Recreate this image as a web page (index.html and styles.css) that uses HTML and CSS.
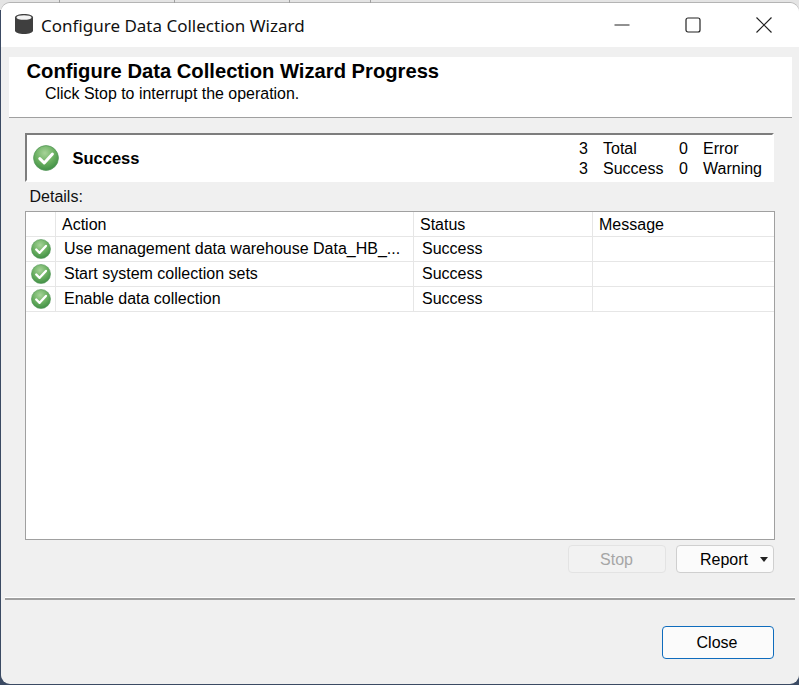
FILE: index.html
```html
<!DOCTYPE html>
<html>
<head>
<meta name="viewport" content="width=device-width, initial-scale=1">
<title>Configure Data Collection Wizard</title>
<link rel="stylesheet" href="styles.css">
</head>
<body>

<svg class="defs" width="0" height="0">
  <defs>
    <radialGradient id="ball" cx="45%" cy="30%" r="75%">
      <stop offset="0" stop-color="#a6d398"/>
      <stop offset="0.55" stop-color="#68ae5f"/>
      <stop offset="1" stop-color="#3a8a42"/>
    </radialGradient>
    <symbol id="ok" viewBox="0 0 26 26">
      <circle cx="13" cy="13" r="12.400" fill="url(#ball)" stroke="#55985a" stroke-width="0.800"/>
      <path d="M6.800 13.600l4.400 4.400 8.200-9" fill="none" stroke="#fff" stroke-width="3" stroke-linecap="round" stroke-linejoin="round"/>
    </symbol>
  </defs>
</svg>

<div class="desktop-strip">
  <span class="tab t1"></span><span class="tab t2"></span><span class="tab t3"></span><span class="tab t4"></span>
</div>

<div class="window">
  <div class="titlebar">
    <svg class="app-icon" width="20" height="22" viewBox="0 0 20 22">
      <path d="M1 4.500C1 2.300 5 1 10 1s9 1.300 9 3.500v13c0 2.200-4 3.500-9 3.500s-9-1.300-9-3.500z" fill="#3f3f3f"/>
      <ellipse cx="10" cy="4.500" rx="7.500" ry="2.300" fill="#f4f4f4"/>
    </svg>
    <span class="title">Configure Data Collection Wizard</span>
    <div class="controls">
      <svg width="16" height="16" viewBox="0 0 16 16"><path d="M0.500 8h15" stroke="#222" stroke-width="1" fill="none"/></svg>
      <svg width="16" height="16" viewBox="0 0 16 16"><rect x="1" y="1" width="14" height="14" rx="2" stroke="#222" stroke-width="1.200" fill="none"/></svg>
      <svg width="16" height="16" viewBox="0 0 16 16"><path d="M0.500 0.500l15 15M15.500 0.500l-15 15" stroke="#222" stroke-width="1.200" fill="none"/></svg>
    </div>
  </div>

  <div class="content">
    <div class="banner">
      <h1>Configure Data Collection Wizard Progress</h1>
      <p>Click Stop to interrupt the operation.</p>
    </div>

    <div class="summary">
      <svg class="big-ok" width="26" height="26"><use href="#ok"/></svg>
      <strong>Success</strong>
      <div class="counts">
        <span class="num">3</span><span>Total</span><span class="num">0</span><span>Error</span>
        <span class="num">3</span><span>Success</span><span class="num">0</span><span>Warning</span>
      </div>
    </div>

    <div class="details-label">Details:</div>

    <div class="table-box">
      <table>
        <colgroup>
          <col class="c-icon"><col class="c-action"><col class="c-status"><col>
        </colgroup>
        <thead>
          <tr><th></th><th>Action</th><th>Status</th><th>Message</th></tr>
        </thead>
        <tbody>
          <tr>
            <td class="ic"><svg width="20" height="20"><use href="#ok"/></svg></td>
            <td>Use management data warehouse Data_HB_...</td><td>Success</td><td></td>
          </tr>
          <tr>
            <td class="ic"><svg width="20" height="20"><use href="#ok"/></svg></td>
            <td>Start system collection sets</td><td>Success</td><td></td>
          </tr>
          <tr>
            <td class="ic"><svg width="20" height="20"><use href="#ok"/></svg></td>
            <td>Enable data collection</td><td>Success</td><td></td>
          </tr>
        </tbody>
      </table>
    </div>

    <div class="actions">
      <button class="btn stop" disabled>Stop</button>
      <button class="btn report">Report<span class="caret"></span></button>
    </div>

    <div class="separator"></div>

    <div class="footer">
      <button class="btn close">Close</button>
    </div>
  </div>
</div>

</body>
</html>
```

FILE: styles.css
```css
* {box-sizing: border-box;}

html, body {
  margin: 0;
  height: 100%;
}

body {
  width: 799px;
  height: 685px;
  overflow: hidden;
  background: linear-gradient(to bottom, #e4e4e4 0, #e4e4e4 10px, #3b4a63 10px);
  font-family: "Liberation Sans", Arial, sans-serif;
  font-size: 16px;
  color: #000;
}

.defs {
  display: block;
  height: 0;
}

.desktop-strip {
  height: 3px;
  margin-left: 1px;
  background-color: #e4e4e4;
  display: flex;
}

.tab {
  height: 3px;
  border-right: 1px solid #a0a0a0;
}
.t1 {width: 59px;}
.t2 {width: 115px;}
.t3 {width: 115px;}
.t4 {width: 81px;}

.window {
  height: 681px;
  margin-left: 1px;
  border-radius: 9px;
  overflow: hidden;
  background-color: #f0f0f0;
  box-shadow: 0 -1px 0 #b4b4b4;
}

.titlebar {
  height: 44px;
  background-color: #fff;
  display: flex;
  align-items: center;
  padding-left: 13px;
}

.app-icon {
  margin: 0 7px 3px 0;
}

.title {
  font-family: "Noto Sans", sans-serif;
  font-size: 17px;
  color: #111;
}

.controls {
  margin-left: auto;
  display: flex;
  gap: 55px;
  padding-right: 27px;
  padding-bottom: 1px;
}

.content {
  height: 637px;
  padding-top: 10px;
}

.banner {
  height: 61px;
  margin-left: 8px;
  margin-right: 7px;
  background-color: #fff;
  border-bottom: 1px solid #a0a0a0;
  padding: 2px 0 0 17.500px;
}

.banner h1 {
  margin: 0;
  font-size: 20.200px;
  line-height: 24px;
  font-weight: bold;
}

.banner p {
  margin: 1px 0 0;
  padding-left: 18.500px;
  font-size: 15.950px;
  line-height: 20px;
}

.summary {
  height: 49px;
  margin: 15px 25px 0 24px;
  background-color: #fff;
  border: 2px solid;
  border-color: #7d7d7d #fff #fff #7d7d7d;
  display: flex;
  align-items: center;
  padding-left: 6px;
}

.summary strong {
  margin: 2px 0 0 13.500px;
  font-size: 16.500px;
}

.counts {
  margin-left: auto;
  display: grid;
  grid-template-columns: 9px 61px 9px auto;
  column-gap: 15px;
  line-height: 20.500px;
  padding: 3px 10px 0 0;
}

.num {
  text-align: right;
}

.details-label {
  margin: 5px 0 0 28.500px;
  line-height: 20px;
  height: 24px;
  color: #111;
}

.table-box {
  height: 329px;
  margin: 0 24px;
  background-color: #fff;
  border: 1px solid #a0a0a0;
  overflow: hidden;
}

table {
  width: 100%;
  border-collapse: collapse;
  table-layout: fixed;
}

.c-icon {width: 29px;}
.c-action {width: 358px;}
.c-status {width: 179px;}

th, td {
  height: 25px;
  padding: 0 0 0 8.500px;
  border: 1px solid #e6e6e6;
  border-top: none;
  font-weight: normal;
  text-align: left;
  white-space: nowrap;
  overflow: hidden;
}

th {
  height: 24px;
  padding: 2px 0 0 6.500px;
}

th:first-child, td:first-child {border-left: none;}
th:last-child, td:last-child {border-right: none;}

td.ic {
  padding: 0 0 0 5px;
}

td.ic svg {
  display: block;
}

.actions {
  display: flex;
  justify-content: flex-end;
  gap: 10px;
  margin: 5px 25px 0 0;
}

.btn {
  height: 28px;
  width: 98px;
  font-family: "Liberation Sans", Arial, sans-serif;
  font-size: 16px;
  color: #000;
  background-color: #fbfbfb;
  border: 1px solid #cfcfcf;
  border-radius: 4px;
  padding: 0;
}

.stop {
  padding: 2px 1px 0 0;
  background-color: #f2f2f2;
  border-color: #e3e3e3;
  color: #a6a6a6;
}

.report {
  position: relative;
  padding: 2px 0 0 23px;
  text-align: left;
}

.caret {
  position: absolute;
  right: 5px;
  top: 11px;
  width: 0;
  height: 0;
  border-left: 4.500px solid transparent;
  border-right: 4.500px solid transparent;
  border-top: 5px solid #222;
}

.separator {
  margin: 24px 4px 0 4px;
  height: 3px;
  border-top: 1px solid #fff;
  border-bottom: 2px solid #a0a0a0;
}

.footer {
  display: flex;
  justify-content: flex-end;
  margin: 26px 25px 0 0;
}

.close {
  width: 112px;
  height: 33px;
  padding-right: 2px;
  border: 1px solid #0f6cbd;
  border-radius: 4px;
}
```
